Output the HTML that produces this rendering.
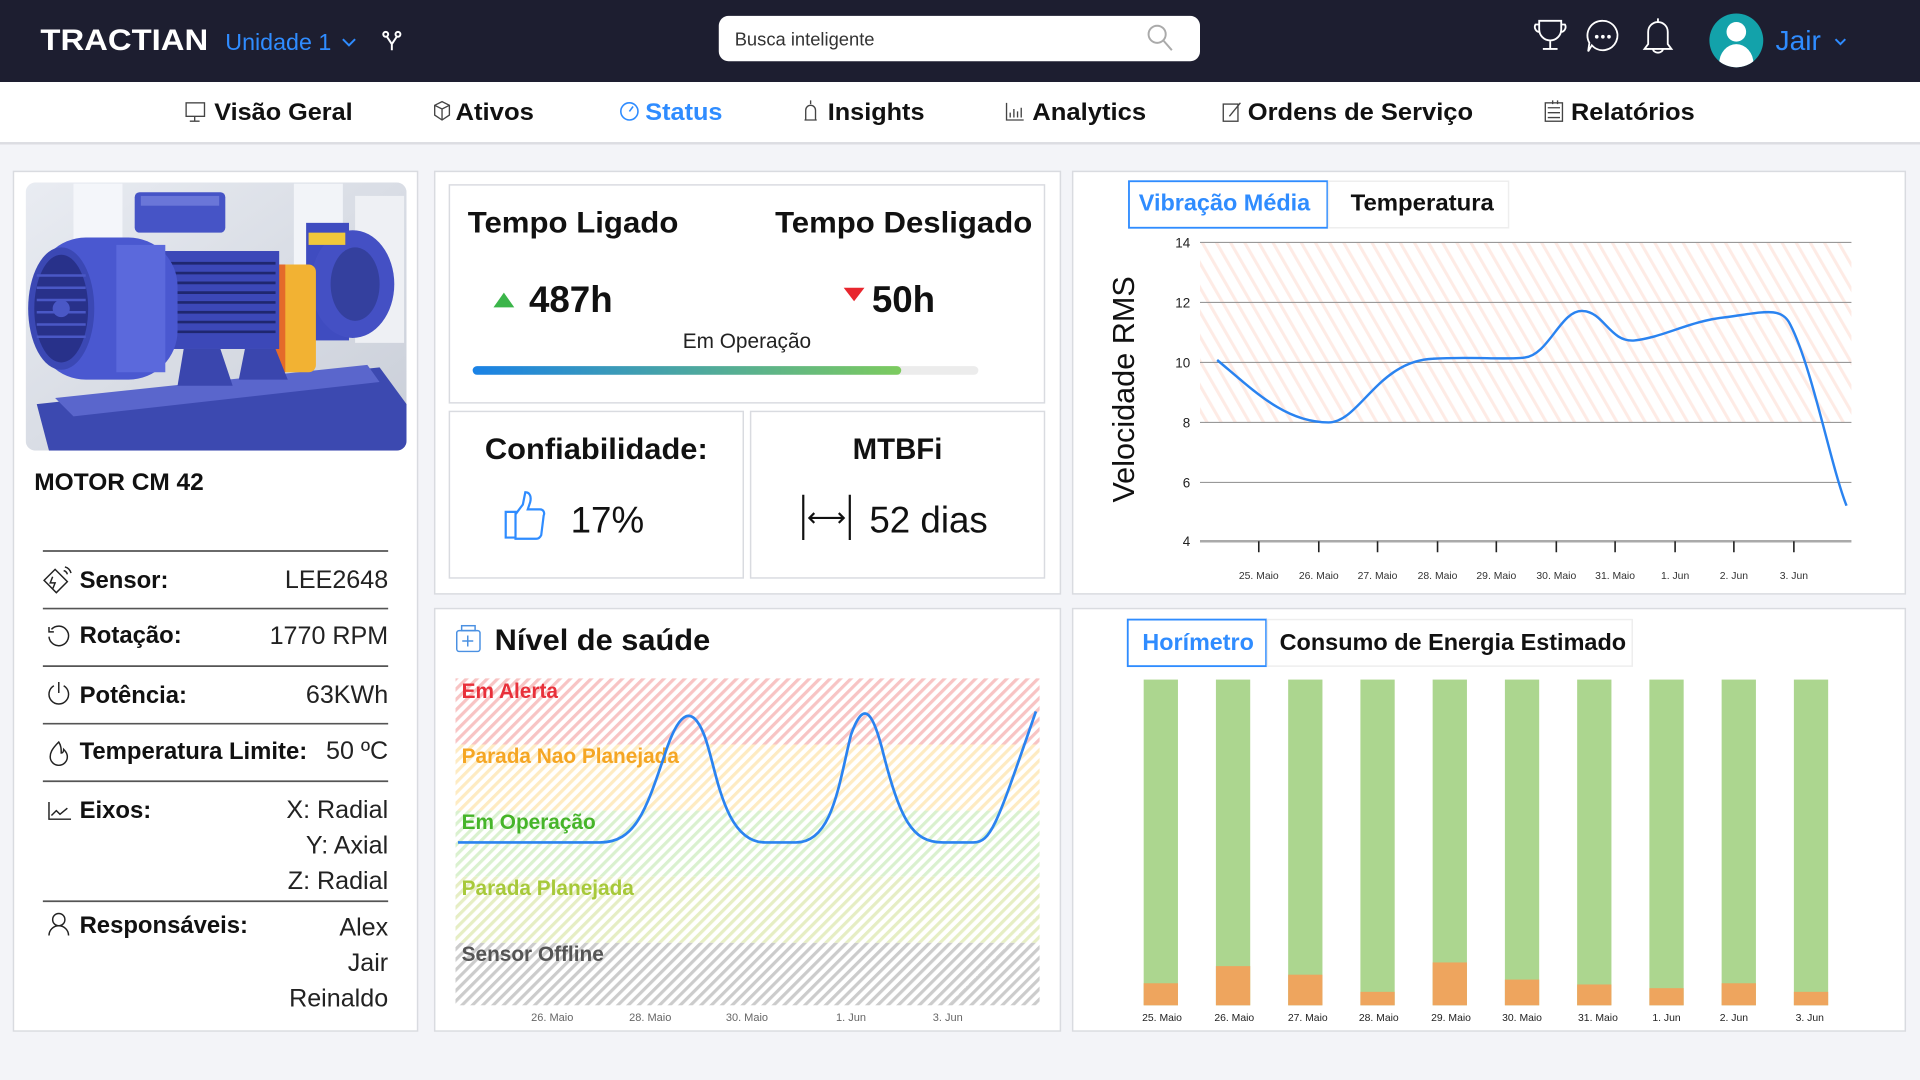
<!DOCTYPE html>
<html><head><meta charset="utf-8"><style>
html,body{margin:0;padding:0;background:#f3f4f8;}
svg{display:block;font-family:"Liberation Sans",Arial,sans-serif;}
</style></head><body>
<svg width="1920" height="1080" viewBox="0 0 1568 882" xmlns="http://www.w3.org/2000/svg">
<defs>
<pattern id="hr" width="6" height="6" patternUnits="userSpaceOnUse" patternTransform="rotate(45)"><rect width="6" height="6" fill="#fff"/><rect width="2.6" height="6" fill="#f8c4c4"/></pattern>
<pattern id="hy" width="6" height="6" patternUnits="userSpaceOnUse" patternTransform="rotate(45)"><rect width="6" height="6" fill="#fff"/><rect width="2.6" height="6" fill="#feebc2"/></pattern>
<pattern id="hg" width="6" height="6" patternUnits="userSpaceOnUse" patternTransform="rotate(45)"><rect width="6" height="6" fill="#fff"/><rect width="2.6" height="6" fill="#daf1cf"/></pattern>
<pattern id="hyg" width="6" height="6" patternUnits="userSpaceOnUse" patternTransform="rotate(45)"><rect width="6" height="6" fill="#fff"/><rect width="2.6" height="6" fill="#e6eec4"/></pattern>
<pattern id="hk" width="6" height="6" patternUnits="userSpaceOnUse" patternTransform="rotate(45)"><rect width="6" height="6" fill="#fff"/><rect width="2.6" height="6" fill="#cccccc"/></pattern>
<pattern id="hv" width="10" height="10" patternUnits="userSpaceOnUse" patternTransform="rotate(-30)"><rect width="10" height="10" fill="#fff"/><rect width="2.5" height="10" fill="#feebe5"/></pattern>
<linearGradient id="pg" x1="0" x2="1"><stop offset="0" stop-color="#1a82e6"/><stop offset="1" stop-color="#7ccb5e"/></linearGradient>
<linearGradient id="bg1" x1="0" y1="0" x2="1" y2="1"><stop offset="0" stop-color="#e9ecf2"/><stop offset="1" stop-color="#c9ced8"/></linearGradient>
<clipPath id="imgc"><rect x="21" y="149" width="311" height="219" rx="8"/></clipPath>
</defs>

<!-- header -->
<rect x="0" y="0" width="1568" height="67" fill="#1d1e30"/>
<text x="33" y="41" font-size="24" font-weight="bold" fill="#fff" textLength="137" lengthAdjust="spacingAndGlyphs">TRACTIAN</text>
<text x="184" y="41" font-size="19" fill="#2f8cff">Unidade 1</text>
<path d="M280 32 l5 5 l5 -5" stroke="#2f8cff" stroke-width="1.6" fill="none"/>
<g stroke="#fff" stroke-width="1.6" fill="none"><circle cx="315" cy="28" r="2"/><circle cx="325" cy="28" r="2"/><path d="M316 30 l4 6 l4 -6 M320 36 v5"/></g>
<rect x="587" y="13" width="393" height="37" rx="8" fill="#fff"/>
<text x="600" y="37" font-size="15" fill="#333">Busca inteligente</text>
<g stroke="#aaa" stroke-width="1.6" fill="none"><circle cx="945" cy="28" r="7"/><path d="M950 33 l7 8"/></g>
<g stroke="#fff" stroke-width="1.5" fill="none">
<path d="M1257 17 h18 v7 a9 9 0 0 1 -18 0 z M1257 20 h-3 a4 4 0 0 0 4 6 M1275 20 h3 a4 4 0 0 1 -4 6 M1266 33 v7 M1260 40 h12"/>
<path d="M1309 17 a12 12 0 1 1 -9 20 l-3 5 l1 -7 a12 12 0 0 1 11 -18z"/>
<path d="M1354 15 v3 M1346 36 v-10 a8 8 0 0 1 16 0 v10 l3 4 h-22 z M1350 40 a4 3 0 0 0 8 0"/>
</g>
<g fill="#fff"><circle cx="1304" cy="30" r="1.5"/><circle cx="1309" cy="30" r="1.5"/><circle cx="1314" cy="30" r="1.5"/></g>
<circle cx="1418" cy="33" r="22" fill="#13a2aa"/>
<clipPath id="av"><circle cx="1418" cy="33" r="22"/></clipPath>
<g clip-path="url(#av)" fill="#fff"><circle cx="1418" cy="26" r="8"/><ellipse cx="1418" cy="52" rx="14" ry="16"/></g>
<text x="1450" y="41" font-size="23" fill="#2f8cff">Jair</text>
<path d="M1499 32 l4 4 l4 -4" stroke="#2f8cff" stroke-width="1.6" fill="none"/>

<!-- nav -->
<rect x="0" y="67" width="1568" height="50" fill="#fff"/>
<rect x="0" y="116" width="1568" height="2" fill="#dcdde2"/>
<g font-size="20" font-weight="bold" fill="#111">
<text x="175" y="98" textLength="113" lengthAdjust="spacingAndGlyphs">Visão Geral</text>
<text x="372" y="98" textLength="64" lengthAdjust="spacingAndGlyphs">Ativos</text>
<text x="527" y="98" fill="#2f8cff" textLength="63" lengthAdjust="spacingAndGlyphs">Status</text>
<text x="676" y="98" textLength="79" lengthAdjust="spacingAndGlyphs">Insights</text>
<text x="843" y="98" textLength="93" lengthAdjust="spacingAndGlyphs">Analytics</text>
<text x="1019" y="98" textLength="184" lengthAdjust="spacingAndGlyphs">Ordens de Serviço</text>
<text x="1283" y="98" textLength="101" lengthAdjust="spacingAndGlyphs">Relatórios</text>
</g>
<g stroke="#444" stroke-width="1.1" fill="none">
<rect x="152" y="84" width="15" height="11"/><path d="M159 95 v4 M155 99 h8"/>
<path d="M355 86 l6 -3 l6 3 v8 l-6 4 l-6 -4 z M355 86 l6 3 l6 -3 M361 89 v9"/>
<path d="M658 98 v-8 a4 4 0 0 1 8 0 v8 z M662 82 v3 M657 98 h10"/>
<path d="M822 84 v14 h14 M825 96 v-4 M828 96 v-7 M831 96 v-5 M834 96 v-8"/>
<rect x="999" y="85" width="12" height="14"/><path d="M1004 95 l9 -11"/>
<rect x="1262" y="84" width="14" height="15"/><path d="M1264 88 h10 M1264 92 h10 M1264 96 h10 M1268 82 v3 M1272 82 v3"/>
</g>
<circle cx="514" cy="91" r="7" stroke="#2f8cff" stroke-width="1.3" fill="none"/><path d="M514 91 l3 -4" stroke="#2f8cff" stroke-width="1.3"/>

<!-- panels -->
<g fill="#fff" stroke="#d9dbe0" stroke-width="1.2">
<rect x="11" y="140" width="330" height="702"/>
<rect x="355" y="140" width="511" height="345"/>
<rect x="355" y="497" width="511" height="345"/>
<rect x="876" y="140" width="680" height="345"/>
<rect x="876" y="497" width="680" height="345"/>
<rect x="367" y="151" width="486" height="178"/>
<rect x="367" y="336" width="240" height="136"/>
<rect x="613" y="336" width="240" height="136"/>
</g>

<!-- motor image -->
<g clip-path="url(#imgc)">
<rect x="21" y="149" width="311" height="219" fill="url(#bg1)"/>
<rect x="60" y="150" width="40" height="60" fill="#f4f6fa"/>
<rect x="240" y="150" width="40" height="80" fill="#f2f4f8"/>
<rect x="290" y="160" width="40" height="120" fill="#eef0f4"/>
<path d="M30 330 L310 300 L332 330 L332 368 L40 368 Z" fill="#3c49b0"/>
<path d="M45 325 L300 298 L310 312 L60 340 Z" fill="#5a66cc"/>
<rect x="250" y="182" width="35" height="96" fill="#3f4cc0"/>
<ellipse cx="288" cy="232" rx="34" ry="44" fill="#4450c4"/>
<ellipse cx="290" cy="232" rx="20" ry="30" fill="#34409e"/>
<rect x="252" y="190" width="30" height="10" fill="#f0c83a"/>
<rect x="223" y="216" width="35" height="88" rx="6" fill="#f2b233"/>
<rect x="223" y="216" width="10" height="88" fill="#e46a2a"/>
<rect x="128" y="205" width="100" height="80" fill="#3c48b8"/>
<g stroke="#1f2770" stroke-width="2.2"><path d="M130 215 h95 M130 223 h95 M130 231 h95 M130 239 h95 M130 247 h95 M130 255 h95 M130 263 h95 M130 271 h95"/></g>
<rect x="110" y="157" width="74" height="33" rx="4" fill="#4654c6"/>
<rect x="115" y="160" width="64" height="8" fill="#6a76d8"/>
<rect x="30" y="194" width="115" height="116" rx="40" fill="#4a58d0"/>
<rect x="95" y="200" width="40" height="104" fill="#5b69dc"/>
<ellipse cx="50" cy="252" rx="27" ry="50" fill="#3b48b4"/>
<ellipse cx="50" cy="252" rx="22" ry="44" fill="#28318a"/>
<g stroke="#4a58c6" stroke-width="2"><path d="M30 225 h40 M30 235 h40 M30 245 h40 M30 255 h40 M30 265 h40 M30 275 h40"/></g>
<circle cx="50" cy="252" r="7" fill="#4a58c6"/>
<path d="M150 285 l30 0 l10 30 l-45 0 z M200 285 l25 0 l10 25 l-40 0 z" fill="#3a46ae"/>
</g>

<!-- left info -->
<text x="28" y="400" font-size="20" font-weight="bold" fill="#111">MOTOR CM 42</text>
<g stroke="#555" stroke-width="1.4"><path d="M35 450 H317 M35 497 H317 M35 544 H317 M35 591 H317 M35 638 H317 M35 736 H317"/></g>
<g font-size="19.5" font-weight="bold" fill="#111">
<text x="65" y="480">Sensor:</text>
<text x="65" y="525">Rotação:</text>
<text x="65" y="574">Potência:</text>
<text x="65" y="620">Temperatura Limite:</text>
<text x="65" y="668">Eixos:</text>
<text x="65" y="762">Responsáveis:</text>
</g>
<g font-size="20.5" fill="#222" text-anchor="end">
<text x="317" y="480">LEE2648</text>
<text x="317" y="526">1770 RPM</text>
<text x="317" y="574">63KWh</text>
<text x="317" y="620">50 ºC</text>
<text x="317" y="668">X: Radial</text>
<text x="317" y="697">Y: Axial</text>
<text x="317" y="726">Z: Radial</text>
<text x="317" y="764">Alex</text>
<text x="317" y="793">Jair</text>
<text x="317" y="822">Reinaldo</text>
</g>
<g stroke="#222" stroke-width="1.2" fill="none">
<path d="M36 474 l9 -9 l10 10 l-9 9 z M43 471 l-2 5 l4 0 l-2 5"/><path d="M52 466 a4 4 0 0 1 3 3 M53 463 a7 7 0 0 1 5 5"/>
<path d="M42 514 a8 8 0 1 1 -2 6 M40 512 v4 h4"/>
<path d="M44 560 a8 8 0 1 0 8 0 M48 557 v9"/>
<path d="M48 606 c-6 6 -7 9 -7 12 a7 7 0 0 0 14 0 c0 -3 -2 -5 -3 -6 c0 2 -1 3 -2 3 c0 -3 0 -6 -2 -9z"/>
<path d="M40 655 v14 h18 M42 666 l4 -4 l3 3 l6 -5"/>
<circle cx="48" cy="751" r="5"/><path d="M40 764 a8 8 0 0 1 16 0"/>
</g>

<!-- tempo card -->
<text x="382" y="190" font-size="24" font-weight="bold" fill="#111" textLength="172" lengthAdjust="spacingAndGlyphs">Tempo Ligado</text>
<text x="633" y="190" font-size="24" font-weight="bold" fill="#111" textLength="210" lengthAdjust="spacingAndGlyphs">Tempo Desligado</text>
<path d="M403 251 l8.5 -12 l8.5 12 z" fill="#3bb54a"/>
<text x="432" y="255" font-size="30" font-weight="bold" fill="#111">487h</text>
<path d="M689 235 h17 l-8.5 11 z" fill="#e8262e"/>
<text x="712" y="255" font-size="30" font-weight="bold" fill="#111">50h</text>
<text x="610" y="284" font-size="17" fill="#222" text-anchor="middle">Em Operação</text>
<rect x="386" y="299" width="413" height="7" rx="3.5" fill="#ececec"/>
<rect x="386" y="299" width="350" height="7" rx="3.5" fill="url(#pg)"/>

<text x="396" y="375" font-size="24" font-weight="bold" fill="#111" textLength="182" lengthAdjust="spacingAndGlyphs">Confiabilidade:</text>
<path d="M413 418 h8 v21 h-8 z M421 420 l6 -8 l2 -10 c4 0 5 4 4 8 l-2 6 h10 c3 0 4 3 3 5 l-2 16 c-1 2 -2 3 -4 3 h-17 z" fill="none" stroke="#2f8cff" stroke-width="1.8"/>
<text x="466" y="435" font-size="30" fill="#111">17%</text>
<text x="733" y="375" font-size="24" font-weight="bold" fill="#111" text-anchor="middle">MTBFi</text>
<g stroke="#111" stroke-width="1.8" fill="none"><path d="M656 404 v37 M694 404 v37 M661 423 h28 M665 419 l-4 4 l4 4 M685 419 l4 4 l-4 4"/></g>
<text x="710" y="435" font-size="30" fill="#111">52 dias</text>

<!-- saude -->
<rect x="373" y="515" width="19" height="17" rx="2" fill="none" stroke="#4a90e2" stroke-width="1.2"/>
<rect x="377" y="511" width="11" height="4" fill="none" stroke="#4a90e2" stroke-width="1.2"/>
<path d="M382 519 v9 M377.5 523.5 h9" stroke="#4a90e2" stroke-width="1.2"/>
<text x="404" y="531" font-size="24" font-weight="bold" fill="#111" textLength="176" lengthAdjust="spacingAndGlyphs">Nível de saúde</text>
<rect x="372" y="554" width="477" height="54" fill="url(#hr)"/>
<rect x="372" y="608" width="477" height="54" fill="url(#hy)"/>
<rect x="372" y="662" width="477" height="54" fill="url(#hg)"/>
<rect x="372" y="716" width="477" height="54" fill="url(#hyg)"/>
<rect x="372" y="770" width="477" height="51" fill="url(#hk)"/>
<g font-size="17" font-weight="bold">
<text x="377" y="570" fill="#e8303a">Em Alerta</text>
<text x="377" y="623" fill="#f5a623">Parada Nao Planejada</text>
<text x="377" y="677" fill="#46b52a">Em Operação</text>
<text x="377" y="731" fill="#a7c93a">Parada Planejada</text>
<text x="377" y="785" fill="#555">Sensor Offline</text>
</g>
<path d="M374 688 L490 688 C520 688 528 660 545 610 C555 582 565 575 575 600 C585 625 590 688 625 688 L650 688 C680 688 685 640 695 600 C705 572 712 580 720 610 C735 670 745 688 770 688 L795 688 C810 688 815 670 846 581" stroke="#2a83f0" stroke-width="2.2" fill="none"/>
<g font-size="9" fill="#666" text-anchor="middle">
<text x="451" y="834">26. Maio</text><text x="531" y="834">28. Maio</text><text x="610" y="834">30. Maio</text><text x="695" y="834">1. Jun</text><text x="774" y="834">3. Jun</text>
</g>

<!-- vibracao -->
<rect x="922" y="148" width="162" height="38" fill="#fff" stroke="#2f8cff" stroke-width="1.5"/>
<rect x="1085" y="148" width="147" height="38" fill="#fff" stroke="#eee" stroke-width="1.2"/>
<text x="930" y="172" font-size="19" font-weight="bold" fill="#2f8cff" textLength="140" lengthAdjust="spacingAndGlyphs">Vibração Média</text>
<text x="1103" y="172" font-size="19" font-weight="bold" fill="#111" textLength="117" lengthAdjust="spacingAndGlyphs">Temperatura</text>
<rect x="980" y="198" width="532" height="147" fill="url(#hv)"/>
<g stroke="#999" stroke-width="1"><path d="M980 198 H1512 M980 247 H1512 M980 296 H1512 M980 345 H1512 M980 394 H1512"/></g>
<path d="M980 442 H1512" stroke="#aaa" stroke-width="2"/>
<g stroke="#222" stroke-width="1.3"><path d="M1028 442 v9 M1077 442 v9 M1125 442 v9 M1174 442 v9 M1222 442 v9 M1271 442 v9 M1319 442 v9 M1368 442 v9 M1416 442 v9 M1465 442 v9"/></g>
<g font-size="11" fill="#222" text-anchor="end"><text x="972" y="202">14</text><text x="972" y="251">12</text><text x="972" y="300">10</text><text x="972" y="349">8</text><text x="972" y="398">6</text><text x="972" y="446">4</text></g>
<text transform="translate(926 318) rotate(-90)" font-size="25" fill="#111" text-anchor="middle">Velocidade RMS</text>
<g font-size="8.5" fill="#333" text-anchor="middle">
<text x="1028" y="473">25. Maio</text><text x="1077" y="473">26. Maio</text><text x="1125" y="473">27. Maio</text><text x="1174" y="473">28. Maio</text><text x="1222" y="473">29. Maio</text><text x="1271" y="473">30. Maio</text><text x="1319" y="473">31. Maio</text><text x="1368" y="473">1. Jun</text><text x="1416" y="473">2. Jun</text><text x="1465" y="473">3. Jun</text>
</g>
<path d="M994 294 C1025 320 1050 345 1085 345 C1110 345 1125 295 1170 293 C1200 291 1230 294 1245 292 C1265 290 1275 252 1293 254 C1310 255 1315 280 1335 278 C1360 275 1380 262 1410 259 C1440 255 1455 250 1462 265 C1480 300 1495 380 1508 413" stroke="#2a83f0" stroke-width="2" fill="none"/>

<!-- horimetro -->
<rect x="921" y="506" width="113" height="38" fill="#fff" stroke="#2f8cff" stroke-width="1.5"/>
<rect x="1035" y="506" width="298" height="38" fill="#fff" stroke="#eee" stroke-width="1.2"/>
<text x="933" y="531" font-size="19" font-weight="bold" fill="#2f8cff" textLength="91" lengthAdjust="spacingAndGlyphs">Horímetro</text>
<text x="1045" y="531" font-size="19" font-weight="bold" fill="#111" textLength="283" lengthAdjust="spacingAndGlyphs">Consumo de Energia Estimado</text>
<g fill="#acd68f">
<rect x="934" y="555" width="28" height="266"/><rect x="993" y="555" width="28" height="266"/><rect x="1052" y="555" width="28" height="266"/><rect x="1111" y="555" width="28" height="266"/><rect x="1170" y="555" width="28" height="266"/><rect x="1229" y="555" width="28" height="266"/><rect x="1288" y="555" width="28" height="266"/><rect x="1347" y="555" width="28" height="266"/><rect x="1406" y="555" width="28" height="266"/><rect x="1465" y="555" width="28" height="266"/>
</g>
<g fill="#eea55e">
<rect x="934" y="803" width="28" height="18"/><rect x="993" y="789" width="28" height="32"/><rect x="1052" y="796" width="28" height="25"/><rect x="1111" y="810" width="28" height="11"/><rect x="1170" y="786" width="28" height="35"/><rect x="1229" y="800" width="28" height="21"/><rect x="1288" y="804" width="28" height="17"/><rect x="1347" y="807" width="28" height="14"/><rect x="1406" y="803" width="28" height="18"/><rect x="1465" y="810" width="28" height="11"/>
</g>
<g font-size="8.5" fill="#222" text-anchor="middle">
<text x="949" y="834">25. Maio</text><text x="1008" y="834">26. Maio</text><text x="1068" y="834">27. Maio</text><text x="1126" y="834">28. Maio</text><text x="1185" y="834">29. Maio</text><text x="1243" y="834">30. Maio</text><text x="1305" y="834">31. Maio</text><text x="1361" y="834">1. Jun</text><text x="1416" y="834">2. Jun</text><text x="1478" y="834">3. Jun</text>
</g>
</svg>
</body></html>
